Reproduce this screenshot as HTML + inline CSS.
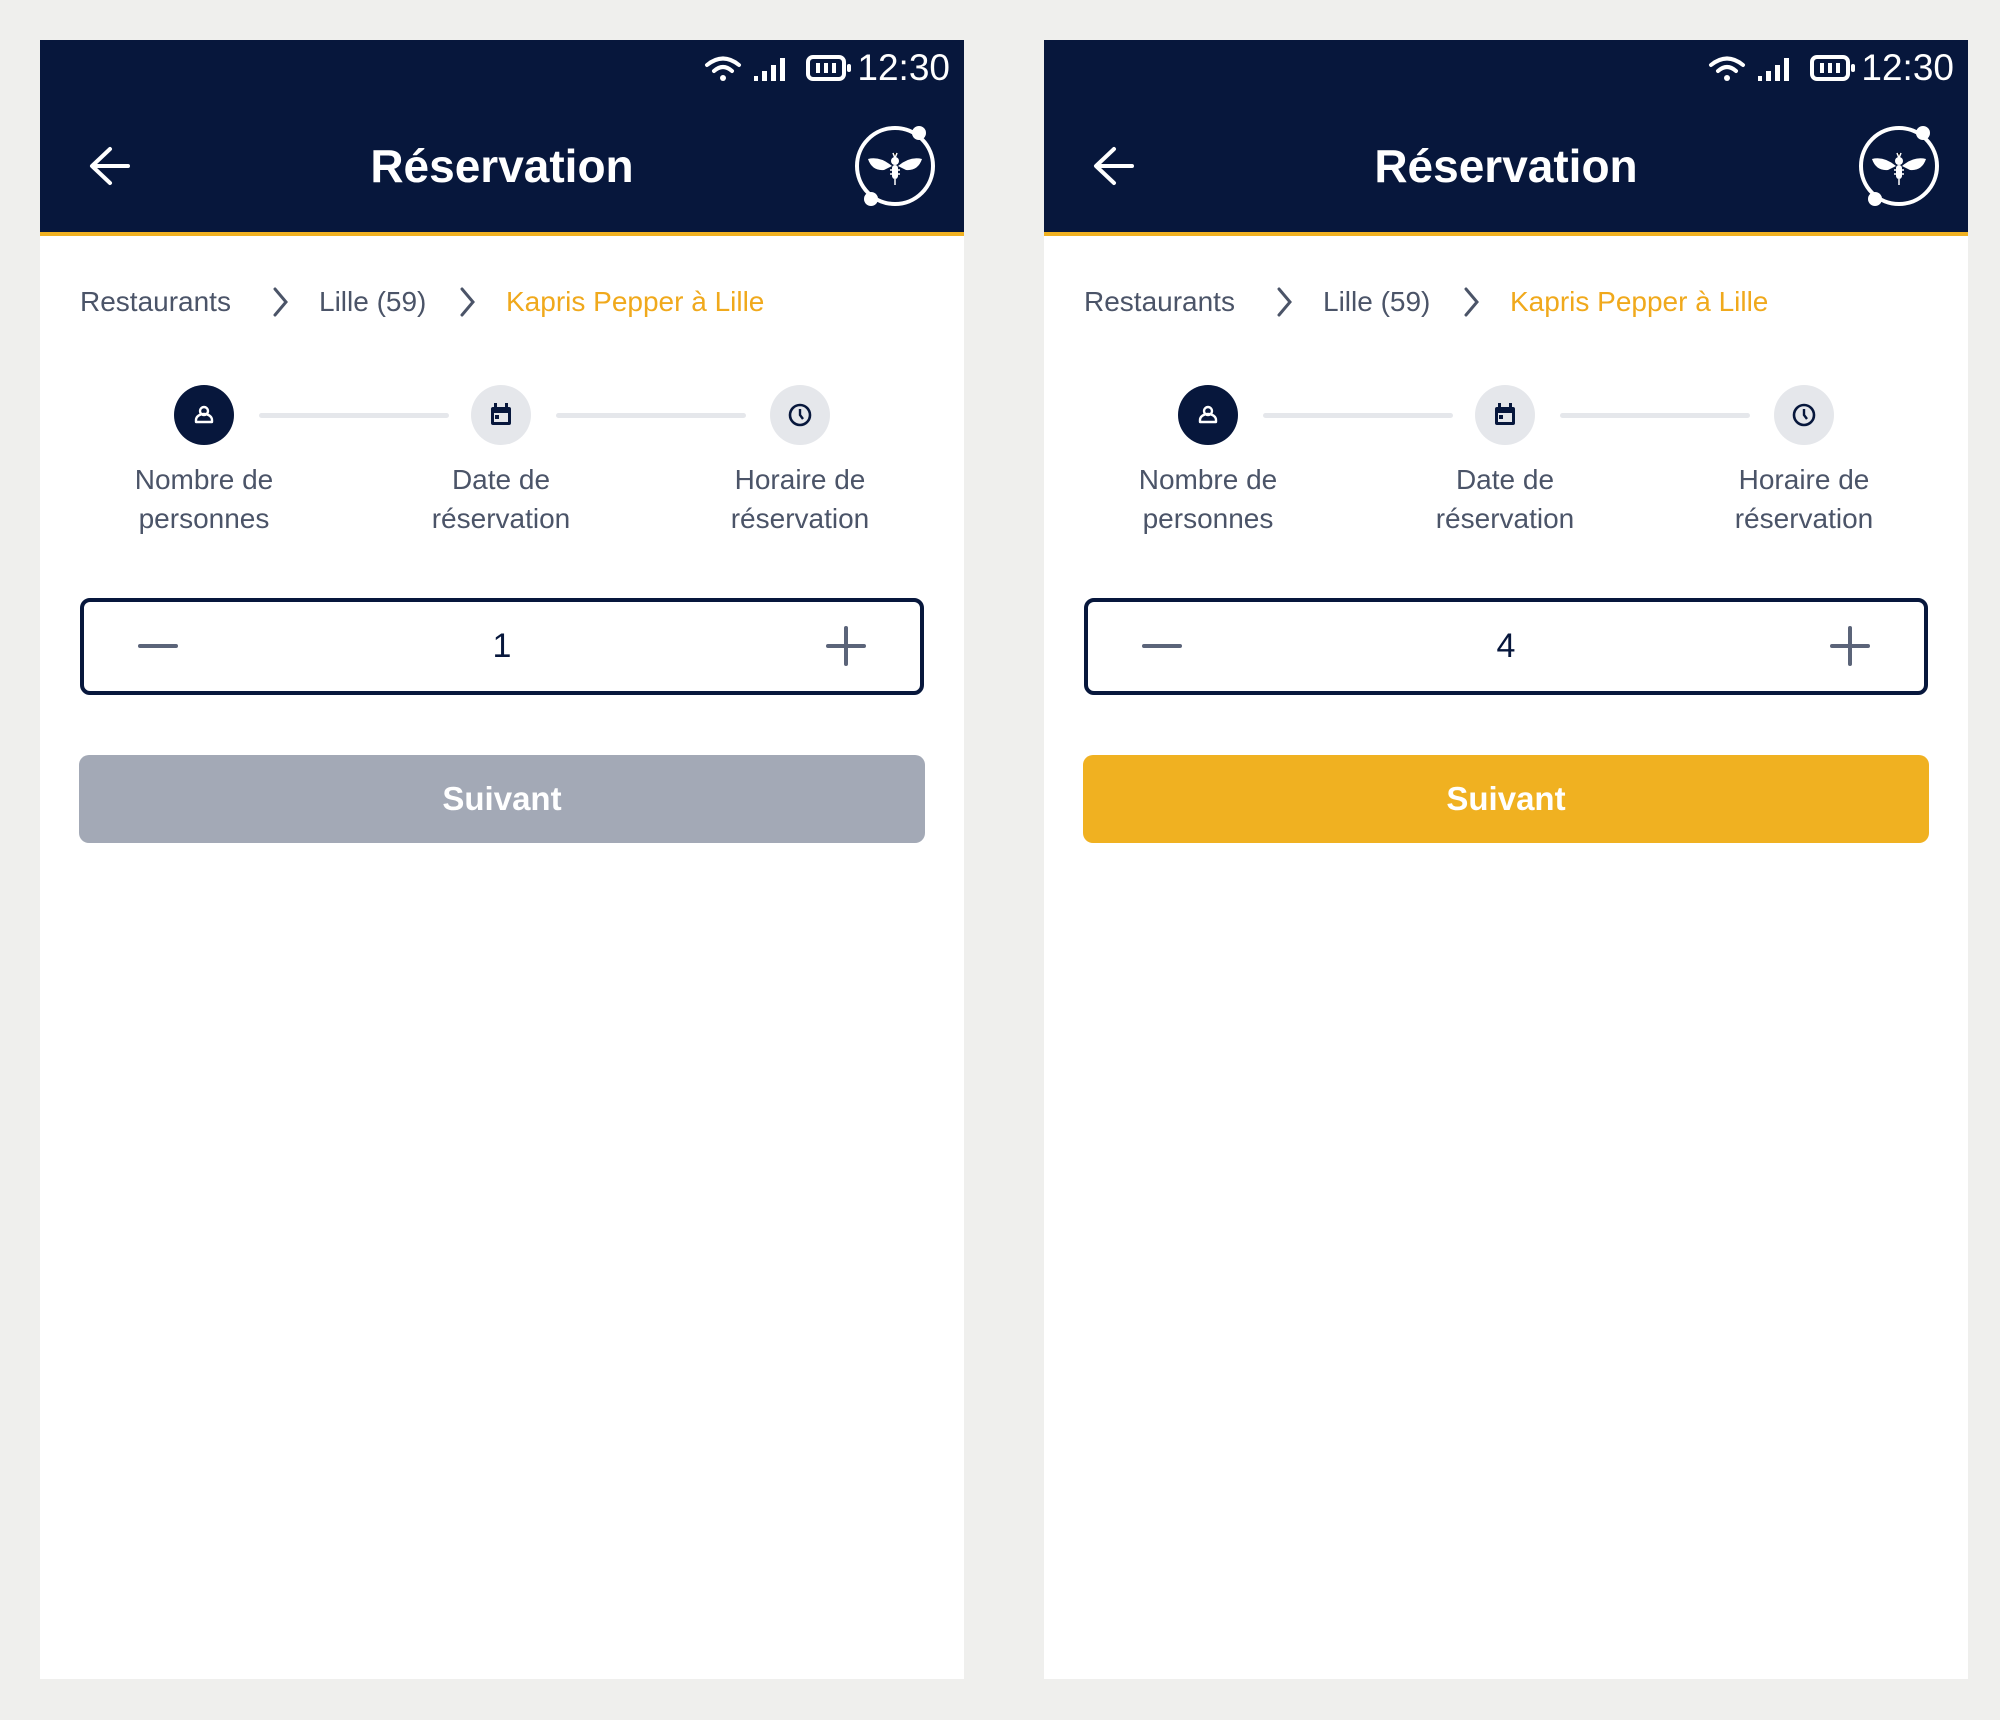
<!DOCTYPE html>
<html><head><meta charset="utf-8"><style>
*{margin:0;padding:0;box-sizing:border-box}
body{width:2000px;height:1720px;background:#efefed;position:relative;overflow:hidden;font-family:"Liberation Sans",sans-serif}
.p{position:absolute;top:40px;width:924px;height:1639px;background:#fff}
.hd{position:absolute;left:0;top:0;width:924px;height:196px;background:#07173c;border-bottom:4px solid #f0b121}
.abs{position:absolute}
.time{right:14px;top:6px;color:#fff;font-size:37px;line-height:44px}
.title{left:0;width:924px;text-align:center;top:98px;color:#fff;font-weight:bold;font-size:46px;line-height:56px}
.bc{top:244px;font-size:28px;line-height:36px;color:#4b5468}
.chev{top:246px}
.circ{width:60px;height:60px;border-radius:50%;background:#e5e7eb;top:345px}
.line{height:5px;background:#e5e7eb;top:373px;width:190px;border-radius:3px}
.lab{top:420px;width:240px;text-align:center;font-size:28px;line-height:39px;color:#4b5468}
.box{left:40px;top:558px;width:844px;height:97px;border:4px solid #07173c;border-radius:10px}
.btn{left:39px;top:715px;width:846px;height:88px;border-radius:10px;color:#fff;font-weight:bold;font-size:33px;line-height:88px;text-align:center}
</style></head><body>

<div class="p" style="left:40px">
<div class="hd">
 <svg class="abs" style="left:663px;top:12px" width="40" height="32" viewBox="0 0 40 32"><path d="M4 13 Q20 0 36 13" stroke="#fff" stroke-width="4" fill="none" stroke-linecap="round"/><path d="M11 19 Q20 11 29 19" stroke="#fff" stroke-width="4" fill="none" stroke-linecap="round"/><circle cx="20" cy="26" r="3" fill="#fff"/></svg>
 <svg class="abs" style="left:713px;top:14px" width="38" height="28"><rect x="1" y="22" width="4" height="5" fill="#fff"/><rect x="9" y="17" width="5" height="10" fill="#fff"/><rect x="18" y="11" width="5" height="16" fill="#fff"/><rect x="27" y="4" width="5" height="23" fill="#fff"/></svg>
 <svg class="abs" style="left:766px;top:14px" width="48" height="28"><rect x="2" y="3" width="36" height="22" rx="5" stroke="#fff" stroke-width="4" fill="none"/><rect x="10" y="9" width="4" height="10" fill="#fff"/><rect x="18" y="9" width="4" height="10" fill="#fff"/><rect x="26" y="9" width="4" height="10" fill="#fff"/><rect x="41" y="10" width="4" height="8" rx="2" fill="#fff"/></svg>
 <div class="abs time">12:30</div>
 <svg class="abs" style="left:48px;top:106px" width="44" height="40" viewBox="0 0 44 40"><path d="M40 20H5M22 3L4 20l18 17" stroke="#fff" stroke-width="4" fill="none" stroke-linecap="round" stroke-linejoin="round"/></svg>
 <div class="abs title">Réservation</div>
 <svg class="abs" style="left:810px;top:81px" width="90" height="90" viewBox="0 0 90 90"><circle cx="45" cy="45" r="38" stroke="#fff" stroke-width="4" fill="none"/><circle cx="69" cy="12" r="7" fill="#fff"/><circle cx="21" cy="78" r="7" fill="#fff"/><path d="M42 45 Q30 35 18 38 Q22 50 34 49Z M48 45 Q60 35 72 38 Q68 50 56 49Z" fill="#fff"/><circle cx="45" cy="40" r="4" fill="#fff"/><rect x="42" y="44" width="6" height="14" rx="3" fill="#fff"/><path d="M45 58v6M40 49h10M40 53h10M43 32l2 5 2-5" stroke="#fff" stroke-width="1.5"/></svg>
</div>
<div class="abs bc" style="left:40px">Restaurants</div>
<svg class="abs chev" style="left:230px" width="20" height="32"><path d="M5 3l11 13-11 13" stroke="#4b5468" stroke-width="3" fill="none" stroke-linecap="round"/></svg>
<div class="abs bc" style="left:279px">Lille (59)</div>
<svg class="abs chev" style="left:417px" width="20" height="32"><path d="M5 3l11 13-11 13" stroke="#4b5468" stroke-width="3" fill="none" stroke-linecap="round"/></svg>
<div class="abs bc" style="left:466px;color:#f0a91c">Kapris Pepper à Lille</div>

<div class="abs circ" style="left:134px;background:#07173c"><svg width="60" height="60"><circle cx="30" cy="26" r="4" stroke="#fff" stroke-width="2.4" fill="none"/><path d="M22 37v-2a8 6 0 0 1 16 0v2z" stroke="#fff" stroke-width="2.4" fill="none" stroke-linejoin="round"/></svg></div>
<div class="abs line" style="left:219px"></div>
<div class="abs circ" style="left:431px"><svg width="60" height="60"><rect x="20" y="22" width="20" height="18" rx="2" fill="#07173c"/><rect x="23" y="28" width="14" height="9" fill="#e5e7eb"/><rect x="24" y="30" width="4" height="4" fill="#07173c"/><rect x="23" y="18" width="3" height="6" fill="#07173c"/><rect x="34" y="18" width="3" height="6" fill="#07173c"/></svg></div>
<div class="abs line" style="left:516px"></div>
<div class="abs circ" style="left:730px"><svg width="60" height="60"><circle cx="30" cy="30" r="10" stroke="#07173c" stroke-width="2.6" fill="none"/><path d="M30 24v6l3 4" stroke="#07173c" stroke-width="2.4" fill="none"/></svg></div>
<div class="abs lab" style="left:44px">Nombre de<br>personnes</div>
<div class="abs lab" style="left:341px">Date de<br>réservation</div>
<div class="abs lab" style="left:640px">Horaire de<br>réservation</div>

<div class="abs box">
 <div class="abs" style="left:54px;top:42px;width:40px;height:4px;background:#5b6479;border-radius:2px"></div>
 <div class="abs" style="left:0;width:836px;text-align:center;top:22px;font-size:34px;line-height:44px;color:#07173c">1</div>
 <div class="abs" style="left:742px;top:42px;width:40px;height:4px;background:#5b6479;border-radius:2px"></div>
 <div class="abs" style="left:760px;top:24px;width:4px;height:40px;background:#5b6479;border-radius:2px"></div>
</div>
<div class="abs btn" style="background:#a3a9b6">Suivant</div>
</div>

<div class="p" style="left:1044px">
<div class="hd">
 <svg class="abs" style="left:663px;top:12px" width="40" height="32" viewBox="0 0 40 32"><path d="M4 13 Q20 0 36 13" stroke="#fff" stroke-width="4" fill="none" stroke-linecap="round"/><path d="M11 19 Q20 11 29 19" stroke="#fff" stroke-width="4" fill="none" stroke-linecap="round"/><circle cx="20" cy="26" r="3" fill="#fff"/></svg>
 <svg class="abs" style="left:713px;top:14px" width="38" height="28"><rect x="1" y="22" width="4" height="5" fill="#fff"/><rect x="9" y="17" width="5" height="10" fill="#fff"/><rect x="18" y="11" width="5" height="16" fill="#fff"/><rect x="27" y="4" width="5" height="23" fill="#fff"/></svg>
 <svg class="abs" style="left:766px;top:14px" width="48" height="28"><rect x="2" y="3" width="36" height="22" rx="5" stroke="#fff" stroke-width="4" fill="none"/><rect x="10" y="9" width="4" height="10" fill="#fff"/><rect x="18" y="9" width="4" height="10" fill="#fff"/><rect x="26" y="9" width="4" height="10" fill="#fff"/><rect x="41" y="10" width="4" height="8" rx="2" fill="#fff"/></svg>
 <div class="abs time">12:30</div>
 <svg class="abs" style="left:48px;top:106px" width="44" height="40" viewBox="0 0 44 40"><path d="M40 20H5M22 3L4 20l18 17" stroke="#fff" stroke-width="4" fill="none" stroke-linecap="round" stroke-linejoin="round"/></svg>
 <div class="abs title">Réservation</div>
 <svg class="abs" style="left:810px;top:81px" width="90" height="90" viewBox="0 0 90 90"><circle cx="45" cy="45" r="38" stroke="#fff" stroke-width="4" fill="none"/><circle cx="69" cy="12" r="7" fill="#fff"/><circle cx="21" cy="78" r="7" fill="#fff"/><path d="M42 45 Q30 35 18 38 Q22 50 34 49Z M48 45 Q60 35 72 38 Q68 50 56 49Z" fill="#fff"/><circle cx="45" cy="40" r="4" fill="#fff"/><rect x="42" y="44" width="6" height="14" rx="3" fill="#fff"/><path d="M45 58v6M40 49h10M40 53h10M43 32l2 5 2-5" stroke="#fff" stroke-width="1.5"/></svg>
</div>
<div class="abs bc" style="left:40px">Restaurants</div>
<svg class="abs chev" style="left:230px" width="20" height="32"><path d="M5 3l11 13-11 13" stroke="#4b5468" stroke-width="3" fill="none" stroke-linecap="round"/></svg>
<div class="abs bc" style="left:279px">Lille (59)</div>
<svg class="abs chev" style="left:417px" width="20" height="32"><path d="M5 3l11 13-11 13" stroke="#4b5468" stroke-width="3" fill="none" stroke-linecap="round"/></svg>
<div class="abs bc" style="left:466px;color:#f0a91c">Kapris Pepper à Lille</div>

<div class="abs circ" style="left:134px;background:#07173c"><svg width="60" height="60"><circle cx="30" cy="26" r="4" stroke="#fff" stroke-width="2.4" fill="none"/><path d="M22 37v-2a8 6 0 0 1 16 0v2z" stroke="#fff" stroke-width="2.4" fill="none" stroke-linejoin="round"/></svg></div>
<div class="abs line" style="left:219px"></div>
<div class="abs circ" style="left:431px"><svg width="60" height="60"><rect x="20" y="22" width="20" height="18" rx="2" fill="#07173c"/><rect x="23" y="28" width="14" height="9" fill="#e5e7eb"/><rect x="24" y="30" width="4" height="4" fill="#07173c"/><rect x="23" y="18" width="3" height="6" fill="#07173c"/><rect x="34" y="18" width="3" height="6" fill="#07173c"/></svg></div>
<div class="abs line" style="left:516px"></div>
<div class="abs circ" style="left:730px"><svg width="60" height="60"><circle cx="30" cy="30" r="10" stroke="#07173c" stroke-width="2.6" fill="none"/><path d="M30 24v6l3 4" stroke="#07173c" stroke-width="2.4" fill="none"/></svg></div>
<div class="abs lab" style="left:44px">Nombre de<br>personnes</div>
<div class="abs lab" style="left:341px">Date de<br>réservation</div>
<div class="abs lab" style="left:640px">Horaire de<br>réservation</div>

<div class="abs box">
 <div class="abs" style="left:54px;top:42px;width:40px;height:4px;background:#5b6479;border-radius:2px"></div>
 <div class="abs" style="left:0;width:836px;text-align:center;top:22px;font-size:34px;line-height:44px;color:#07173c">4</div>
 <div class="abs" style="left:742px;top:42px;width:40px;height:4px;background:#5b6479;border-radius:2px"></div>
 <div class="abs" style="left:760px;top:24px;width:4px;height:40px;background:#5b6479;border-radius:2px"></div>
</div>
<div class="abs btn" style="background:#f0b121">Suivant</div>
</div>

</body></html>
